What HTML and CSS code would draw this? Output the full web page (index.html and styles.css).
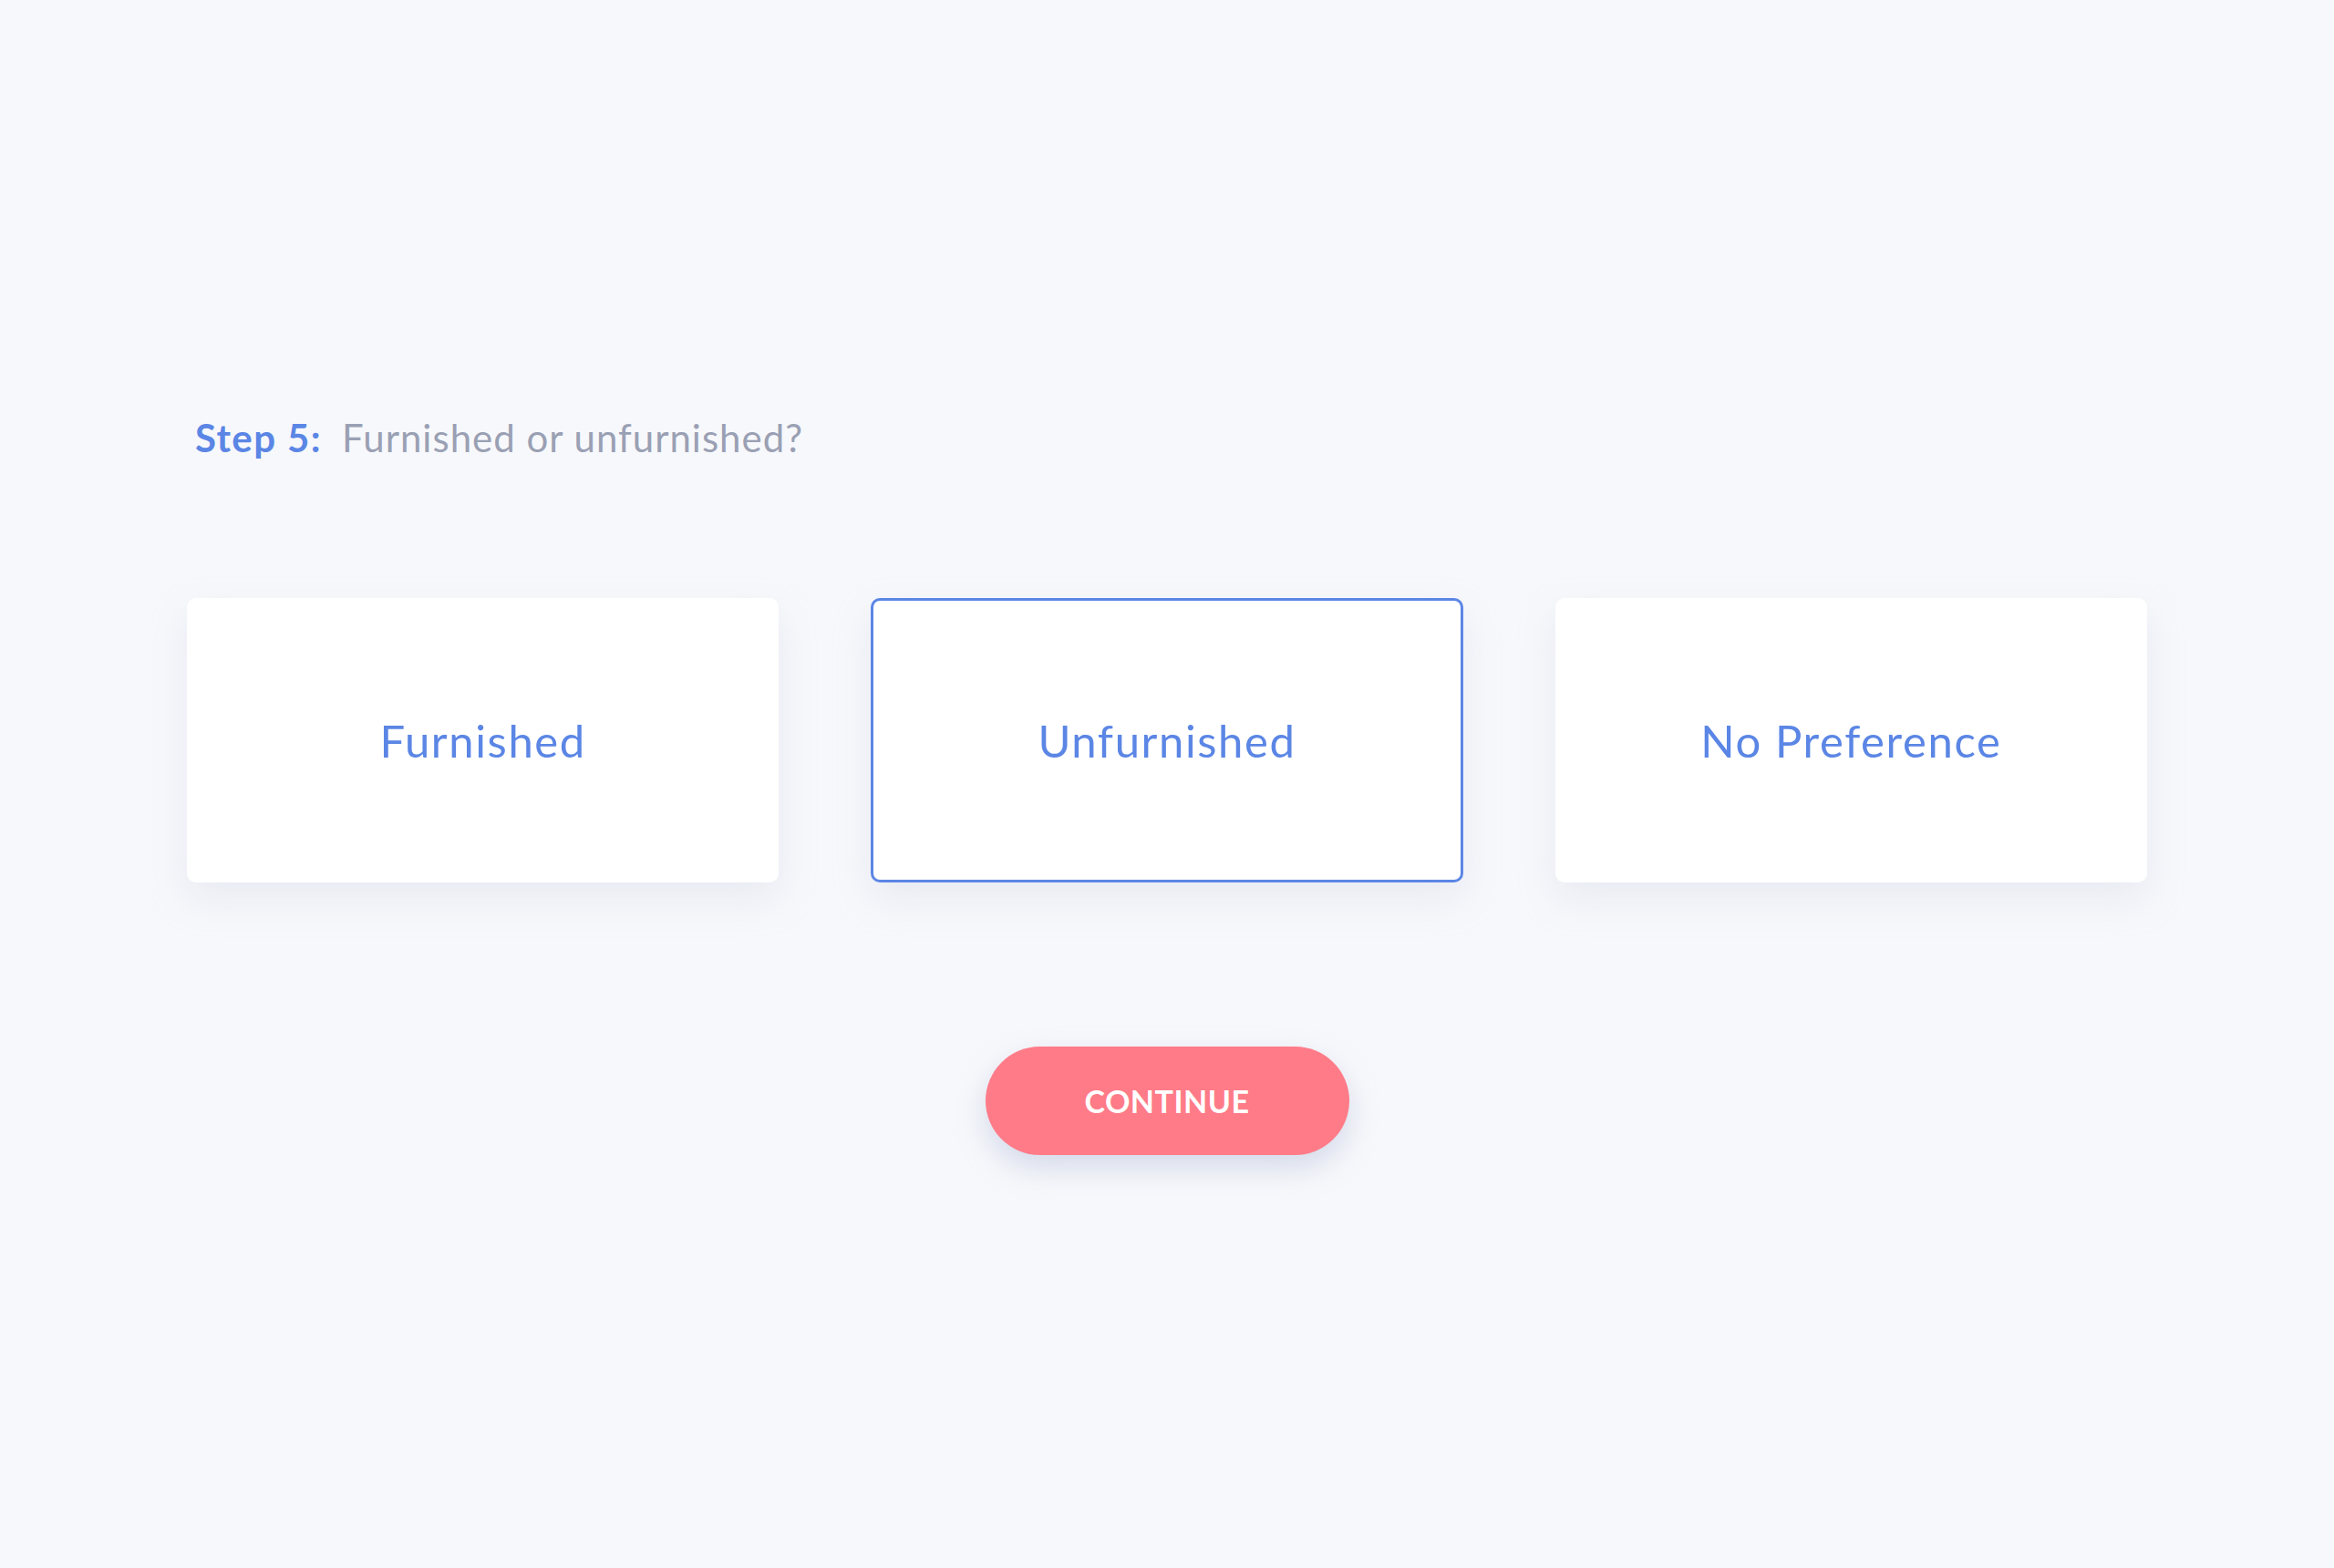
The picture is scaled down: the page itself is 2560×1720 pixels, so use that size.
FILE: index.html
```html
<!DOCTYPE html>
<html lang="en">
<head>
<meta charset="utf-8">
<title>Step 5: Furnished or unfurnished?</title>
<link rel="stylesheet" href="styles.css">
</head>
<body>
<main class="page">
  <h1 class="step"><span class="step-num">Step 5:</span><span class="step-q">Furnished or unfurnished?</span></h1>
  <div class="options">
    <button class="option" type="button">Furnished</button>
    <button class="option option--selected" type="button">Unfurnished</button>
    <button class="option" type="button">No Preference</button>
  </div>
  <div class="actions">
    <button class="continue" type="button">CONTINUE</button>
  </div>
</main>
</body>
</html>
```

FILE: styles.css
```css
html, body {
  margin: 0;
  padding: 0;
}
body {
  background: #f7f8fb;
  font-family: "Lato", "Open Sans", "Liberation Sans", sans-serif;
  min-height: 1720px;
}
.page {
  width: 2150px;
  margin: 0 auto;
  padding-top: 459px;
}
.step {
  margin: 0 0 0 9px;
  font-size: 42px;
  line-height: 1;
  font-weight: 400;
  display: flex;
  align-items: baseline;
}
.step-num {
  color: #5b86e5;
  font-weight: 700;
  letter-spacing: 1.4px;
  margin-right: 22px;
}
.step-q {
  color: #9aa0b4;
  letter-spacing: 1px;
}
.options {
  margin-top: 155px;
  display: grid;
  grid-template-columns: repeat(3, 1fr);
  gap: 101px;
}
.option {
  height: 312px;
  box-sizing: border-box;
  background: #ffffff;
  border: 3px solid transparent;
  border-radius: 10px;
  box-shadow: 0 18px 40px rgba(196, 202, 224, 0.28);
  font-family: inherit;
  font-size: 49px;
  font-weight: 400;
  letter-spacing: 1.6px;
  color: #5b86e5;
  padding: 0;
  cursor: pointer;
}
.option--selected {
  border-color: #5b86e5;
}
.actions {
  margin-top: 180px;
  display: flex;
  justify-content: center;
}
.continue {
  width: 399px;
  height: 119px;
  border: none;
  border-radius: 60px;
  background: #ff7b88;
  color: #ffffff;
  font-family: inherit;
  font-size: 34px;
  font-weight: 700;
  letter-spacing: 0.5px;
  box-shadow: 0 14px 32px rgba(170, 182, 212, 0.45);
  cursor: pointer;
  padding: 0;
}
```
